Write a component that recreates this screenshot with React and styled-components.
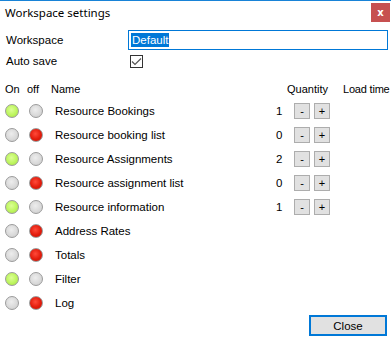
import styled, { createGlobalStyle } from "styled-components";

const GlobalStyle = createGlobalStyle`
  body {
    margin: 0;
    background: #ffffff;
    font-family: "Liberation Sans", Arial, sans-serif;
  }
`;

const modules = [
  { name: "Resource Bookings", on: true, qty: 1 },
  { name: "Resource booking list", on: false, qty: 0 },
  { name: "Resource Assignments", on: true, qty: 2 },
  { name: "Resource assignment list", on: false, qty: 0 },
  { name: "Resource information", on: true, qty: 1 },
  { name: "Address Rates", on: false },
  { name: "Totals", on: false },
  { name: "Filter", on: true },
  { name: "Log", on: false },
];

function Lamp({ kind }) {
  return <LampDot kind={kind} />;
}

function App() {
  return (
    <>
      <GlobalStyle />
      <Window>
        <TitleBar>
          <Title>Workspace settings</Title>
          <CloseX>x</CloseX>
        </TitleBar>

        <Form>
          <FieldRow>
            <Label>Workspace</Label>
            <TextBox>
              <Selected>Default</Selected>
            </TextBox>
          </FieldRow>
          <FieldRow small>
            <Label>Auto save</Label>
            <CheckBox>
              <svg width="11" height="9" viewBox="0 0 11 9">
                <path d="M1 4.5 L4 7.5 L10 1.5" fill="none" stroke="#555" strokeWidth="1.2" />
              </svg>
            </CheckBox>
          </FieldRow>
        </Form>

        <HeaderRow>
          <HeadOn>On</HeadOn>
          <HeadOff>off</HeadOff>
          <HeadName>Name</HeadName>
          <HeadQty>Quantity</HeadQty>
          <HeadLoad>Load time</HeadLoad>
        </HeaderRow>

        <List>
          {modules.map((m) => (
            <ModuleRow key={m.name}>
              <Lamp kind={m.on ? "green" : "grey"} />
              <Lamp kind={m.on ? "grey" : "red"} />
              <Name>{m.name}</Name>
              {m.qty !== undefined && (
                <>
                  <Count>{m.qty}</Count>
                  <StepButton>-</StepButton>
                  <StepButton>+</StepButton>
                </>
              )}
            </ModuleRow>
          ))}
        </List>

        <Footer>
          <CloseButton>Close</CloseButton>
        </Footer>
      </Window>
    </>
  );
}

export default App;

const Window = styled.div`
  width: 391px;
  height: 338px;
  box-sizing: border-box;
  border-top: 1px solid #1883d7;
  background: #ffffff;
  display: flex;
  flex-direction: column;
  color: #000;
  font-size: 11px;
  overflow: hidden;
`;

const TitleBar = styled.div`
  display: flex;
  justify-content: space-between;
  align-items: flex-start;
  height: 24px;
`;

const Title = styled.div`
  font-family: "Noto Sans", "Open Sans", sans-serif;
  font-size: 11.5px;
  padding: 4px 0 0 5px;
`;

const CloseX = styled.div`
  width: 19px;
  height: 19px;
  margin-top: 2px;
  margin-right: 1px;
  background: #c75050;
  color: #fff;
  font-weight: bold;
  font-size: 10px;
  display: flex;
  align-items: center;
  justify-content: center;
  font-family: "DejaVu Sans", sans-serif;
`;

const Form = styled.div`
  display: flex;
  flex-direction: column;
  gap: 4px;
  padding: 8px 3px 0 6px;
`;

const FieldRow = styled.div`
  display: flex;
  align-items: center;
  height: ${(p) => (p.small ? "14px" : "20px")};
`;

const Label = styled.div`
  width: 122px;
  font-size: 11.5px;
`;

const TextBox = styled.div`
  flex: 1;
  height: 20px;
  box-sizing: border-box;
  border: 1px solid #0078d7;
  display: flex;
  align-items: center;
  padding-left: 2px;
`;

const Selected = styled.span`
  background: #0078d7;
  color: #fff;
  font-size: 11.5px;
  line-height: 14px;
  padding: 0 1px;
`;

const CheckBox = styled.div`
  width: 13px;
  height: 13px;
  margin-left: 2px;
  box-sizing: border-box;
  border: 1px solid #333;
  display: flex;
  align-items: center;
  justify-content: center;
`;

const HeaderRow = styled.div`
  display: flex;
  align-items: center;
  height: 14px;
  margin-top: 15px;
  font-size: 11px;
  white-space: nowrap;
`;

const HeadOn = styled.div`
  padding-left: 5px;
  width: 22px;
  flex-shrink: 0;
`;

const HeadOff = styled.div`
  width: 24px;
  flex-shrink: 0;
`;

const HeadName = styled.div`
  width: 236px;
  flex-shrink: 0;
`;

const HeadQty = styled.div`
  width: 56px;
  flex-shrink: 0;
`;

const HeadLoad = styled.div`
  flex-shrink: 0;
  letter-spacing: -0.2px;
`;

const List = styled.div`
  display: flex;
  flex-direction: column;
  margin-top: 4px;
`;

const ModuleRow = styled.div`
  display: flex;
  align-items: center;
  height: 24px;
  padding-left: 5px;
`;

const lampColors = {
  green: "radial-gradient(circle at 45% 40%, #dcff96 0%, #bdf55e 55%, #a2da46 100%)",
  grey: "radial-gradient(circle at 45% 40%, #ededed 0%, #dadada 55%, #c9c9c9 100%)",
  red: "radial-gradient(circle at 45% 40%, #ff4a3a 0%, #e21c0c 55%, #c41406 100%)",
};

const LampDot = styled.div`
  width: 14px;
  height: 14px;
  box-sizing: border-box;
  border-radius: 50%;
  border: 1px solid #9b9b9b;
  background: ${(p) => lampColors[p.kind]};
  margin-right: 10px;
  & + & {
    margin-right: 12px;
  }
`;

const Name = styled.div`
  width: 216px;
  font-size: 11.5px;
`;

const Count = styled.div`
  width: 13px;
  padding-left: 5px;
  margin-right: 5px;
  font-size: 11.5px;
`;

const StepButton = styled.div`
  width: 16px;
  height: 16px;
  box-sizing: border-box;
  border: 1px solid #adadad;
  background: #e1e1e1;
  display: flex;
  align-items: center;
  justify-content: center;
  font-size: 11px;
  margin-right: 4px;
`;

const Footer = styled.div`
  flex: 1;
  display: flex;
  align-items: flex-end;
  justify-content: flex-end;
  padding: 0 4px 4px 0;
`;

const CloseButton = styled.div`
  width: 78px;
  height: 21px;
  box-sizing: border-box;
  border: 2px solid #0078d7;
  background: #e1e1e1;
  display: flex;
  align-items: center;
  justify-content: center;
  font-size: 11.5px;
`;
